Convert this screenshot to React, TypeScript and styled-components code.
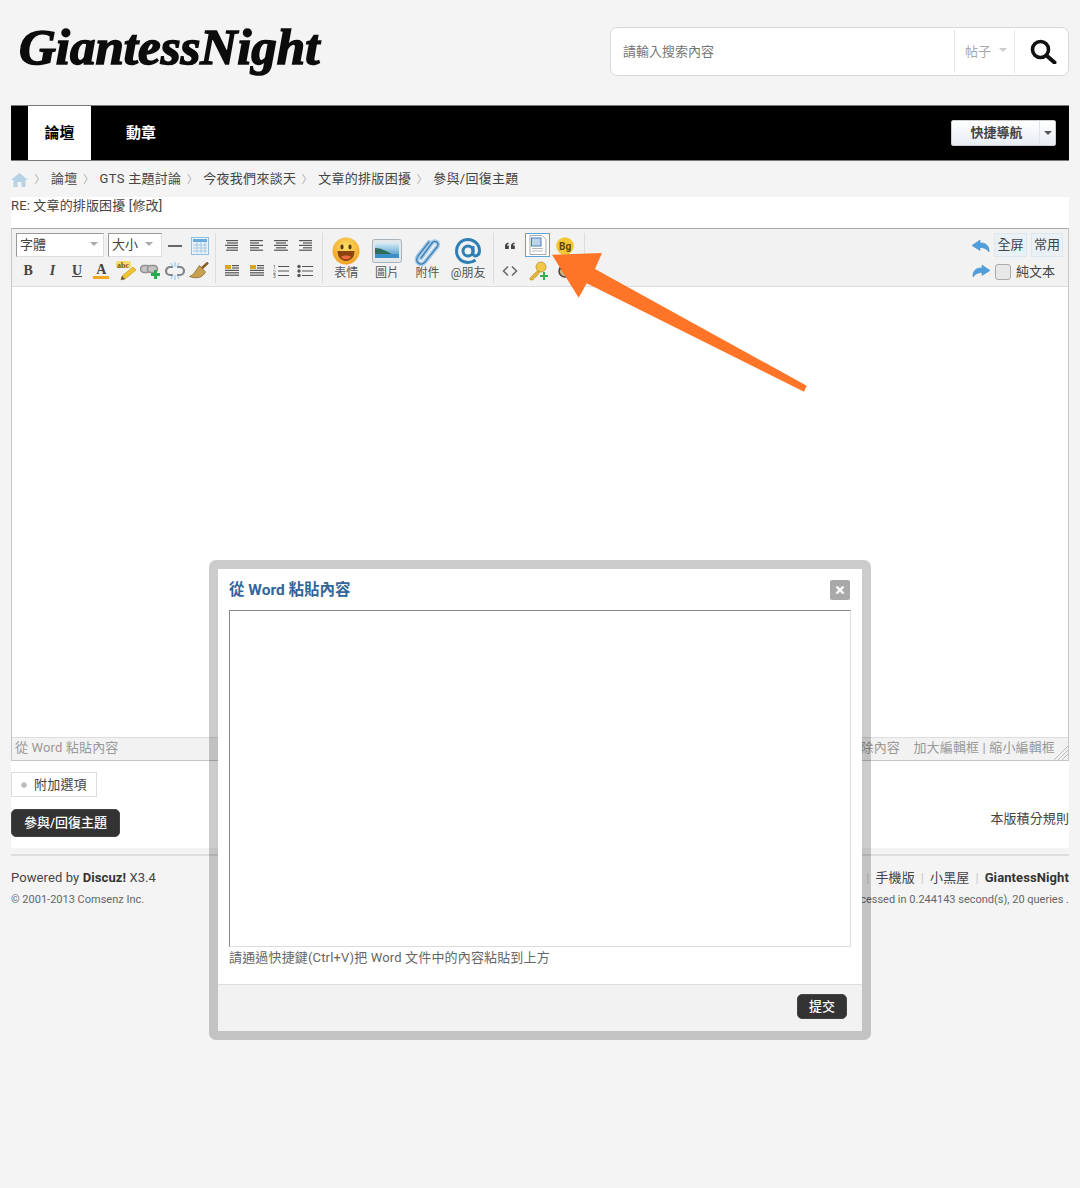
import styled, { createGlobalStyle } from "styled-components";
import { ReactNode } from "react";

const GlobalStyle = createGlobalStyle`
  html, body {
    margin: 0;
    padding: 0;
    background: #f4f4f4;
  }
  body {
    font-family: Roboto, "Noto Sans CJK TC", sans-serif;
    font-size: 13px;
    color: #444;
  }
  * {
    box-sizing: border-box;
  }
`;

const Page = styled.div`
  position: relative;
  width: 1080px;
  height: 1188px;
  padding: 0 11px;
  overflow: hidden;
`;

const Header = styled.header`
  height: 105px;
  display: flex;
  justify-content: space-between;
  align-items: flex-start;
`;

const Logo = styled.div`
  padding: 16px 0 0 8px;
  font-family: "Liberation Serif", serif;
  font-style: italic;
  font-weight: 700;
  font-size: 51px;
  line-height: 62px;
  letter-spacing: 0;
  color: #0c0c0c;
  -webkit-text-stroke: 1.6px #0c0c0c;
`;

const Search = styled.div`
  margin-top: 27px;
  width: 459px;
  height: 49px;
  display: flex;
  align-items: center;
  background: #fff;
  border: 1px solid #d8d8d8;
  border-radius: 7px;
  padding: 2px 0;
`;

const SearchText = styled.div`
  flex: 1;
  padding: 0 0 3px 12px;
  color: #757575;
`;

const SearchKind = styled.div`
  width: 61px;
  height: 100%;
  flex: none;
  display: flex;
  align-items: center;
  gap: 8px;
  padding: 0 0 3px 10px;
  color: #a8a8a8;
  border-left: 1px solid #e6e6e6;
  border-right: 1px solid #e6e6e6;
`;

const SmallCaret = styled.span<{ $color?: string }>`
  width: 0;
  height: 0;
  border-left: 4px solid transparent;
  border-right: 4px solid transparent;
  border-top: 4px solid ${(p) => p.$color || "#ccc"};
`;

const SearchBtn = styled.div`
  width: 53px;
  flex: none;
  display: flex;
  justify-content: center;
  align-items: center;
  padding-left: 4px;
`;

const Nav = styled.nav`
  height: 56px;
  background: #000;
  border-top: 1px solid #777;
  border-bottom: 1px solid #777;
  display: flex;
  align-items: stretch;
  padding-left: 17px;
`;

const NavTab = styled.a<{ $active?: boolean }>`
  width: ${(p) => (p.$active ? "63px" : "100px")};
  display: flex;
  justify-content: center;
  align-items: center;
  font-size: 15px;
  font-weight: 700;
  color: ${(p) => (p.$active ? "#000" : "#fff")};
  background: ${(p) => (p.$active ? "#fff" : "transparent")};
  padding-bottom: 4px;
`;

const QuickNav = styled.div`
  margin: 14px 13px 0 auto;
  width: 105px;
  height: 26px;
  display: flex;
  border-radius: 2px;
  background: linear-gradient(#ffffff, #e6ecf4);
  border: 1px solid #ccc;
  color: #444;
  font-weight: 700;
`;

const QuickLabel = styled.span`
  flex: 1;
  display: flex;
  justify-content: center;
  align-items: center;
  padding: 0 0 3px 2px;
  border-right: 1px solid #dfe4ea;
`;

const QuickCaret = styled.span`
  width: 15px;
  display: flex;
  justify-content: center;
  align-items: center;
`;

const Crumbs = styled.div`
  height: 36px;
  display: flex;
  align-items: center;
  padding-bottom: 3px;
  color: #444;
  svg {
    margin: 4px 1px 0 0;
  }
`;

const Crumb = styled.span`
  display: flex;
  align-items: center;
  letter-spacing: 0.28px;
`;

const Chevron = styled.span`
  width: 22px;
  text-align: center;
  color: #aaa;
  font-size: 11px;
`;

const Panel = styled.main`
  height: 651px;
  background: #fff;
  display: flex;
  flex-direction: column;
`;

const PostTitle = styled.div`
  height: 31px;
  line-height: 17px;
  letter-spacing: 0.15px;
`;

const Editor = styled.section`
  height: 533px;
  border: 1px solid #c5c5c5;
  border-top-color: #aaa;
  display: flex;
  flex-direction: column;
`;

const Toolbar = styled.div`
  height: 58px;
  flex: none;
  display: flex;
  padding: 4px 5px 0 4px;
  background: #f2f2f2;
  border-bottom: 1px solid #ddd;
`;

const Group = styled.div<{ $width: number; $pad?: number; $row?: boolean }>`
  width: ${(p) => p.$width}px;
  height: 50px;
  padding-left: ${(p) => p.$pad || 0}px;
  border-right: 1px solid #ddd;
  display: ${(p) => (p.$row ? "flex" : "block")};
`;

const Row = styled.div`
  height: 25px;
  display: flex;
  align-items: center;
`;

const Select = styled.div<{ $width: number; $caretPad: number; $gap: number }>`
  width: ${(p) => p.$width}px;
  height: 24px;
  margin-right: ${(p) => p.$gap}px;
  margin-top: -1px;
  display: flex;
  align-items: center;
  justify-content: space-between;
  padding: 0 ${(p) => p.$caretPad}px 3px 3px;
  background: #fff;
  border: 1px solid #ddd;
  border-left-color: #999;
  border-top-color: #999;
  color: #444;
`;

const Cell = styled.span<{ $width?: number }>`
  width: ${(p) => p.$width || 24.4}px;
  height: 24px;
  flex: none;
  display: flex;
  justify-content: center;
  align-items: center;
`;

const Letter = styled.span<{ $italic?: boolean; $under?: boolean; $bar?: boolean }>`
  font-family: "Liberation Serif", serif;
  font-weight: 700;
  font-size: 14px;
  line-height: 13px;
  color: #444;
  padding: 0 ${(p) => (p.$bar ? "3px" : "0")};
  font-style: ${(p) => (p.$italic ? "italic" : "normal")};
  text-decoration: ${(p) => (p.$under ? "underline" : "none")};
  border-bottom: ${(p) => (p.$bar ? "3px solid #f5a623" : "none")};
`;

const BigBtn = styled.div`
  width: 40.6px;
  height: 50px;
  display: flex;
  flex-direction: column;
  align-items: center;
  padding-top: 2px;
  font-size: 12px;
  line-height: 14px;
  color: #555;
`;

const BigIcon = styled.span`
  height: 31px;
  flex: none;
  display: flex;
  align-items: center;
`;

const WordCell = styled(Cell)`
  height: 24px;
  margin: -1px 0 0 1px;
  border: 1px solid #5aa5d8;
  background: #fff;
`;

const RightTools = styled.div`
  margin-left: auto;
  width: 95px;
`;

const ToolBtn = styled.span`
  height: 24px;
  width: 33px;
  flex: none;
  margin-top: -1px;
  padding-bottom: 3px;
  display: flex;
  justify-content: center;
  align-items: center;
  color: #444;
  background: #e9f0f6;
  border: 1px solid #dfe7ee;
  & + & {
    margin-left: 4px;
    width: 32px;
  }
`;

const CheckBox = styled.span`
  width: 16px;
  height: 16px;
  flex: none;
  margin: 2px 5px 0 1px;
  border: 1px solid #aaa;
  border-radius: 3px;
  background: #e8e8e8;
`;

const PlainLabel = styled.span`
  padding-bottom: 1px;
`;

const WriteArea = styled.div`
  flex: 1;
  background: #fff;
`;

const StatusBar = styled.div`
  height: 23px;
  flex: none;
  position: relative;
  display: flex;
  justify-content: space-between;
  align-items: center;
  padding: 0 13px 5px 3px;
  background: #f2f2f2;
  border-top: 1px solid #ddd;
  color: #999;
  letter-spacing: 0.15px;
`;

const Resize = styled.span`
  position: absolute;
  right: 0;
  bottom: 0;
  display: flex;
`;

const Options = styled.div`
  margin-top: 11px;
  width: 86px;
  height: 25px;
  display: flex;
  align-items: center;
  gap: 7px;
  padding: 0 0 2px 9px;
  border: 1px solid #ddd;
  color: #444;
  letter-spacing: 0.2px;
`;

const Dot = styled.span`
  width: 6px;
  height: 6px;
  margin-top: 2px;
  border-radius: 50%;
  background: #bbb;
  border: 1px solid #ccc;
`;

const SubmitRow = styled.div`
  margin-top: 12px;
  display: flex;
  justify-content: space-between;
  align-items: flex-start;
`;

const DarkButton = styled.button<{ $width: number; $height: number }>`
  width: ${(p) => p.$width}px;
  height: ${(p) => p.$height}px;
  padding: 0 0 3px;
  font: inherit;
  font-weight: 500;
  color: #fff;
  background: #333;
  border: 1px solid #444;
  border-radius: 5px;
`;

const RuleLink = styled.span`
  line-height: 19px;
  letter-spacing: 0.1px;
  color: #444;
`;

const Footer = styled.footer`
  margin-top: 6px;
  border-top: 2px solid #ddd;
  padding-top: 14px;
  display: flex;
  justify-content: space-between;
`;

const FooterCol = styled.div<{ $right?: boolean }>`
  text-align: ${(p) => (p.$right ? "right" : "left")};
  color: #666;
  line-height: 16px;
`;

const FooterLine = styled.div`
  color: #444;
  letter-spacing: 0.1px;
  b {
    font-weight: 700;
    color: #333;
  }
`;

const FooterSmall = styled.div`
  margin-top: 7px;
  font-size: 11px;
  line-height: 14px;
  color: #666;
`;

const Pipe = styled.span`
  margin: 0 6px;
  color: #ccc;
`;

const Modal = styled.div`
  position: absolute;
  left: 209px;
  top: 560px;
  width: 662px;
  height: 480px;
  border: 9px solid rgba(0, 0, 0, 0.2);
  border-radius: 7px;
  background-clip: padding-box;
  background-color: #fff;
  display: flex;
  flex-direction: column;
`;

const ModalBody = styled.div`
  flex: 1;
  padding: 0 11px;
`;

const ModalHead = styled.div`
  height: 41px;
  display: flex;
  justify-content: space-between;
  align-items: center;
  padding: 0 1px 0 0;
`;

const ModalTitle = styled.h3`
  margin: 0 0 4px;
  font-size: 15.5px;
  font-weight: 700;
  color: #369;
`;

const CloseBtn = styled.span`
  width: 20px;
  height: 20px;
  display: flex;
  justify-content: center;
  align-items: center;
  background: #a9a9a9;
  border-radius: 2px;
`;

const PasteBox = styled.textarea`
  display: block;
  width: 622px;
  height: 337px;
  padding: 0;
  resize: none;
  background: #fff;
  border: 1px solid #ddd;
  border-top-color: #888;
  border-left-color: #888;
  outline: none;
`;

const Hint = styled.p`
  margin: 2px 0 0;
  line-height: 17px;
  letter-spacing: 0.16px;
  color: #666;
`;

const ModalFoot = styled.div`
  height: 47px;
  flex: none;
  display: flex;
  justify-content: flex-end;
  align-items: center;
  padding: 0 15px 3px 0;
  background: #f2f2f2;
  border-top: 1px solid #ddd;
`;

const ArrowLayer = styled.svg`
  position: absolute;
  left: 0;
  top: 0;
  pointer-events: none;
`;

const UndoSvg = styled.svg<{ $flip?: boolean }>`
  transform: ${(p) => (p.$flip ? "scaleX(-1)" : "none")};
`;

const Ic = ({ w = 18, h = 18, children }: { w?: number; h?: number; children: ReactNode }) => (
  <svg width={w} height={h} viewBox={`0 0 ${w} ${h}`}>
    {children}
  </svg>
);

// alignment bars, x/width pairs for every line
const Lines = ({ rows, box }: { rows: [number, number][]; box?: boolean }) => (
  <Ic w={16} h={14}>
    {rows.map(([x, w], i) => (
      <rect key={i} x={x} y={1 + i * 2.4} width={w} height={1.2} fill="#555" />
    ))}
    {box && <rect x={1} y={1} width={6} height={4} fill="#d9a520" />}
  </Ic>
);

const HomeIcon = () => (
  <svg width="17" height="14" viewBox="0 0 17 14">
    <path d="M8.5 0 L17 7 H14.5 V14 H10.5 V9 H6.5 V14 H2.5 V7 H0 Z" fill="#b5d2e6" />
  </svg>
);

const SearchIcon = () => (
  <svg width="27" height="25" viewBox="0 0 27 25">
    <circle cx="10.5" cy="10.5" r="8" fill="none" stroke="#111" strokeWidth="3.6" />
    <path d="M16.5 16.5 L24.5 23.5" stroke="#111" strokeWidth="4" strokeLinecap="round" />
  </svg>
);

const TableIcon = () => (
  <Ic w={18} h={18}>
    <rect x=".5" y=".5" width="17" height="17" fill="#e8f2fa" stroke="#8fc0e0" />
    <rect x="2" y="2" width="14" height="3" fill="#6aaadc" />
    <path d="M2 8h14M2 11h14M2 14h14M6 5v11M10 5v11M14 5v11" stroke="#a9c8df" strokeWidth="1" />
  </Ic>
);

const AbcIcon = () => (
  <Ic w={22} h={20}>
    <rect x="1" y="0" width="15" height="7" rx="2" fill="#f6dc6a" />
    <text x="2" y="6.5" fontFamily="Liberation Serif" fontWeight="700" fontSize="8" fill="#7a5a10">abc</text>
    <path d="M18 6 L21 9 L10 18 L6 19 L7 15 Z" fill="#f1c232" stroke="#c99a20" strokeWidth=".7" />
    <path d="M7 15 L6 19 L10 18 Z" fill="#555" />
  </Ic>
);

const LinkIcon = () => (
  <Ic w={20} h={18}>
    <rect x="0.500" y="3.500" width="10" height="7" rx="3.500" fill="#c4c4c4" stroke="#929292" strokeWidth="1.600" />
    <rect x="7.500" y="3.500" width="10" height="7" rx="3.500" fill="#c4c4c4" stroke="#929292" strokeWidth="1.600" />
    <path d="M14 8h3v3h3v3h-3v3h-3v-3h-3v-3h3z" fill="#2fa84f" />
  </Ic>
);

const UnlinkIcon = () => (
  <Ic w={20} h={18}>
    <path d="M8 5H5a4 4 0 0 0 0 8h3M12 5h3a4 4 0 0 1 0 8h-3" fill="none" stroke="#7f8589" strokeWidth="2.200" />
    <path d="M10 0v5M10 13v5M6 1l2 4M14 1l-2 4M6 17l2-4M14 17l-2-4" stroke="#8cc4ec" strokeWidth="1" />
  </Ic>
);

const BroomIcon = () => (
  <Ic w={20} h={18}>
    <path d="M19 0.500 L12 7" stroke="#8a5c22" strokeWidth="2.400" />
    <path d="M10.500 3.500 L16.500 10 C13.500 16 7 17 0.500 14.500 C5 13 7 8 10.500 3.500 Z" fill="#c9a04f" stroke="#7d5e24" strokeWidth=".7" />
  </Ic>
);

const SmileIcon = () => (
  <svg width="28" height="28" viewBox="0 0 28 28">
    <defs>
      <radialGradient id="sm" cx="50%" cy="35%" r="65%">
        <stop offset="0%" stopColor="#ffe26a" />
        <stop offset="100%" stopColor="#f0a020" />
      </radialGradient>
    </defs>
    <circle cx="14" cy="14" r="13.5" fill="url(#sm)" />
    <ellipse cx="10" cy="10" rx="1.6" ry="2.4" fill="#5c3a10" />
    <ellipse cx="18" cy="10" rx="1.6" ry="2.4" fill="#5c3a10" />
    <path d="M5.500 14 H22.500 C22.500 21 18 24 14 24 C10 24 5.500 21 5.500 14 Z" fill="#8a4310" />
    <path d="M9 20 C11 18 17 18 19 20 C17 23 11 23 9 20 Z" fill="#ef6a3a" />
  </svg>
);

const ImageIcon = () => (
  <svg width="30" height="24" viewBox="0 0 30 24">
    <defs>
      <linearGradient id="sky" x1="0" y1="0" x2="0" y2="1">
        <stop offset="0%" stopColor="#d4ecf8" />
        <stop offset="100%" stopColor="#3d8fc4" />
      </linearGradient>
    </defs>
    <rect x=".5" y=".5" width="29" height="23" rx="2" fill="#e4e8ea" stroke="#a9b2b8" />
    <rect x="3" y="4" width="24" height="15" fill="url(#sky)" />
    <path d="M3 9 C9 9 14 12 20 15 H3 Z" fill="#2f6d5a" />
    <path d="M3 15 H27 V19 H3 Z" fill="#3b8fc6" />
  </svg>
);

const ClipIcon = () => (
  <svg width="28" height="30" viewBox="0 0 28 30">
    <path
      d="M8 22 L19 7 C22 3 27 7 24 11 L12 26 C8 31 1 26 5 20 L16 6"
      fill="none"
      stroke="#a8cbe6"
      strokeWidth="4.400"
      strokeLinecap="round"
    />
    <path
      d="M8 22 L19 7 C22 3 27 7 24 11 L12 26 C8 31 1 26 5 20 L16 6"
      fill="none"
      stroke="#3c7fb6"
      strokeWidth="1.300"
      strokeLinecap="round"
    />
  </svg>
);

const AtIcon = () => (
  <svg width="28" height="28" viewBox="0 0 28 28">
    <circle cx="14" cy="14" r="5" fill="none" stroke="#2f7fb5" strokeWidth="3" />
    <path
      d="M19 9 V16.500 C19 20 25.500 20 25.500 14 C25.500 7 20 2.500 14 2.500 C7 2.500 2.500 8 2.500 14 C2.500 20.500 7.500 25.500 14 25.500 C17 25.500 19.500 24.500 21.500 23"
      fill="none"
      stroke="#2f7fb5"
      strokeWidth="3"
    />
  </svg>
);

const QuoteIcon = () => (
  <Ic w={12} h={10}>
    <path d="M1 8V5C1 3 2 2 4.500 1.500V3C3.500 3.300 3 3.800 3 4.500H4.800V8ZM7 8V5C7 3 8 2 10.500 1.500V3C9.500 3.300 9 3.800 9 4.500H10.800V8Z" fill="#444" />
  </Ic>
);

const WordIcon = () => (
  <Ic w={18} h={20}>
    <path d="M1 .5 H13 L17 4.500 V19.500 H1 Z" fill="#fff" stroke="#a9a9a9" />
    <rect x="2.500" y="3" width="9.500" height="8" fill="#bcd4ee" stroke="#4c7fb8" />
    <path d="M3 13.500h11M3 16h11" stroke="#b8b8b8" />
  </Ic>
);

const BgIcon = () => (
  <svg width="18" height="18" viewBox="0 0 18 18">
    <circle cx="9" cy="9" r="8.800" fill="#f2c635" />
    <text x="3" y="12.500" fontFamily="Roboto" fontWeight="700" fontSize="10" fill="#5a4510">Bg</text>
  </svg>
);

const CodeIcon = () => (
  <Ic w={16} h={12}>
    <path d="M6 1.500 L1.500 6 L6 10.500 M10 1.500 L14.500 6 L10 10.500" fill="none" stroke="#666" strokeWidth="1.500" />
  </Ic>
);

const KeyIcon = () => (
  <Ic w={20} h={20}>
    <circle cx="13" cy="6" r="5" fill="#f0c84a" stroke="#b08a20" strokeWidth=".7" />
    <path d="M10 9 L2 17 L2 19 L5 19 L6 17 L8 16 L12 11 Z" fill="#e2b53a" stroke="#b08a20" strokeWidth=".5" />
    <path d="M12 14h3v-3h2v3h3v2h-3v3h-2v-3h-3z" fill="#35b04f" />
  </Ic>
);

const PaletteIcon = () => (
  <Ic w={16} h={16}>
    <circle cx="8" cy="8" r="6" fill="#c9b27a" stroke="#444" strokeWidth="1.500" />
    <circle cx="5" cy="5" r="2" fill="#222" />
  </Ic>
);

const UndoIcon = ({ flip }: { flip?: boolean }) => (
  <UndoSvg $flip={flip} width="18" height="14" viewBox="0 0 18 14">
    <path d="M8 1 L0 6.500 L8 11.500 V8.500 C12 8.500 15 10 17 13 C17.500 7 14 3.500 8 4 Z" fill="#4f9fdc" stroke="#3c84bd" strokeWidth=".5" />
  </UndoSvg>
);

const ResizeIcon = () => (
  <svg width="14" height="14" viewBox="0 0 14 14">
    <path d="M14 0 L0 14 M14 4 L4 14 M14 8 L8 14" stroke="#bbb" strokeWidth="1" />
  </svg>
);

const CloseIcon = () => (
  <svg width="10" height="10" viewBox="0 0 10 10">
    <path d="M1.500 1.500 L8.500 8.500 M8.500 1.500 L1.500 8.500" stroke="#fff" strokeWidth="2.400" />
  </svg>
);

const crumbs = ["論壇", "GTS 主題討論", "今夜我們來談天", "文章的排版困擾", "參與/回復主題"];

function App() {
  return (
    <Page>
      <GlobalStyle />
      <Header>
        <Logo>GiantessNight</Logo>
        <Search>
          <SearchText>請輸入搜索內容</SearchText>
          <SearchKind>
            帖子
            <SmallCaret />
          </SearchKind>
          <SearchBtn>
            <SearchIcon />
          </SearchBtn>
        </Search>
      </Header>

      <Nav>
        <NavTab $active>論壇</NavTab>
        <NavTab>動章</NavTab>
        <QuickNav>
          <QuickLabel>快捷導航</QuickLabel>
          <QuickCaret>
            <SmallCaret $color="#555" />
          </QuickCaret>
        </QuickNav>
      </Nav>

      <Crumbs>
        <HomeIcon />
        {crumbs.map((c) => (
          <Crumb key={c}>
            <Chevron>〉</Chevron>
            {c}
          </Crumb>
        ))}
      </Crumbs>

      <Panel>
        <PostTitle>RE: 文章的排版困擾 [修改]</PostTitle>
        <Editor>
          <Toolbar>
            <Group $width={200}>
              <Row>
                <Select $width={88} $caretPad={5} $gap={4}>
                  字體
                  <SmallCaret $color="#aaa" />
                </Select>
                <Select $width={54} $caretPad={8} $gap={1}>
                  大小
                  <SmallCaret $color="#aaa" />
                </Select>
                <Cell>
                  <Ic w={14} h={4}>
                    <rect y="1" width="14" height="2" fill="#666" />
                  </Ic>
                </Cell>
                <Cell>
                  <TableIcon />
                </Cell>
              </Row>
              <Row>
                <Cell>
                  <Letter>B</Letter>
                </Cell>
                <Cell>
                  <Letter $italic>I</Letter>
                </Cell>
                <Cell>
                  <Letter $under>U</Letter>
                </Cell>
                <Cell>
                  <Letter $bar>A</Letter>
                </Cell>
                <Cell>
                  <AbcIcon />
                </Cell>
                <Cell>
                  <LinkIcon />
                </Cell>
                <Cell>
                  <UnlinkIcon />
                </Cell>
                <Cell>
                  <BroomIcon />
                </Cell>
              </Row>
            </Group>

            <Group $width={107} $pad={4}>
              <Row>
                <Cell>
                  <Lines rows={[[2, 12], [3, 11], [1, 13], [3, 11], [2, 12]]} />
                </Cell>
                <Cell>
                  <Lines rows={[[1, 13], [1, 9], [1, 13], [1, 9], [1, 13]]} />
                </Cell>
                <Cell>
                  <Lines rows={[[1, 14], [3, 10], [1, 14], [3, 10], [1, 14]]} />
                </Cell>
                <Cell>
                  <Lines rows={[[2, 13], [6, 9], [2, 13], [6, 9], [2, 13]]} />
                </Cell>
              </Row>
              <Row>
                <Cell>
                  <Lines box rows={[[8, 7], [8, 7], [1, 14], [1, 14], [1, 14]]} />
                </Cell>
                <Cell>
                  <Lines box rows={[[8, 7], [8, 7], [1, 14], [1, 14], [1, 14]]} />
                </Cell>
                <Cell>
                  <Ic w={16} h={14}>
                    <text x="0" y="5" fontSize="5" fontFamily="Roboto" fill="#555">1</text>
                    <text x="0" y="9.500" fontSize="5" fontFamily="Roboto" fill="#555">2</text>
                    <text x="0" y="14" fontSize="5" fontFamily="Roboto" fill="#555">3</text>
                    <path d="M5 2.500h11M5 7h11M5 11.500h11" stroke="#555" strokeWidth="1.200" />
                  </Ic>
                </Cell>
                <Cell>
                  <Ic w={16} h={14}>
                    <circle cx="2" cy="2.500" r="1.700" fill="#555" />
                    <circle cx="2" cy="7" r="1.700" fill="#555" />
                    <circle cx="2" cy="11.500" r="1.700" fill="#555" />
                    <path d="M5 2.500h11M5 7h11M5 11.500h11" stroke="#555" strokeWidth="1.200" />
                  </Ic>
                </Cell>
              </Row>
            </Group>

            <Group $width={171} $pad={3} $row>
              <BigBtn>
                <BigIcon>
                  <SmileIcon />
                </BigIcon>
                表情
              </BigBtn>
              <BigBtn>
                <BigIcon>
                  <ImageIcon />
                </BigIcon>
                圖片
              </BigBtn>
              <BigBtn>
                <BigIcon>
                  <ClipIcon />
                </BigIcon>
                附件
              </BigBtn>
              <BigBtn>
                <BigIcon>
                  <AtIcon />
                </BigIcon>
                @朋友
              </BigBtn>
            </Group>

            <Group $width={91} $pad={2}>
              <Row>
                <Cell $width={28}>
                  <QuoteIcon />
                </Cell>
                <WordCell $width={25}>
                  <WordIcon />
                </WordCell>
                <Cell $width={30}>
                  <BgIcon />
                </Cell>
              </Row>
              <Row>
                <Cell $width={28}>
                  <CodeIcon />
                </Cell>
                <Cell $width={28}>
                  <KeyIcon />
                </Cell>
                <Cell $width={26}>
                  <PaletteIcon />
                </Cell>
              </Row>
            </Group>

            <RightTools>
              <Row>
                <Cell $width={26}>
                  <UndoIcon />
                </Cell>
                <ToolBtn>全屏</ToolBtn>
                <ToolBtn>常用</ToolBtn>
              </Row>
              <Row>
                <Cell $width={26}>
                  <UndoIcon flip />
                </Cell>
                <CheckBox />
                <PlainLabel>純文本</PlainLabel>
              </Row>
            </RightTools>
          </Toolbar>
          <WriteArea />
          <StatusBar>
            <span>從 Word 粘貼內容</span>
            <span>清除內容 &nbsp;&nbsp; 加大編輯框 | 縮小編輯框</span>
            <Resize>
              <ResizeIcon />
            </Resize>
          </StatusBar>
        </Editor>
        <Options>
          <Dot />
          附加選項
        </Options>
        <SubmitRow>
          <DarkButton $width={109} $height={28}>參與/回復主題</DarkButton>
          <RuleLink>本版積分規則</RuleLink>
        </SubmitRow>
      </Panel>

      <Footer>
        <FooterCol>
          <FooterLine>
            Powered by <b>Discuz!</b> X3.4
          </FooterLine>
          <FooterSmall>© 2001-2013 Comsenz Inc.</FooterSmall>
        </FooterCol>
        <FooterCol $right>
          <FooterLine>
            <Pipe>|</Pipe>手機版<Pipe>|</Pipe>小黑屋<Pipe>|</Pipe>
            <b>GiantessNight</b>
          </FooterLine>
          <FooterSmall>Processed in 0.244143 second(s), 20 queries .</FooterSmall>
        </FooterCol>
      </Footer>

      <Modal>
        <ModalBody>
          <ModalHead>
            <ModalTitle>從 Word 粘貼內容</ModalTitle>
            <CloseBtn>
              <CloseIcon />
            </CloseBtn>
          </ModalHead>
          <PasteBox readOnly />
          <Hint>請通過快捷鍵(Ctrl+V)把 Word 文件中的內容粘貼到上方</Hint>
        </ModalBody>
        <ModalFoot>
          <DarkButton $width={50} $height={25}>提交</DarkButton>
        </ModalFoot>
      </Modal>

      <ArrowLayer width="1080" height="1188">
        <polygon
          points="552,254.700 602,253 595,269 806.700,385.700 804,391.700 586.700,283.300 578.700,297.700"
          fill="#fe7527"
        />
      </ArrowLayer>
    </Page>
  );
}

export default App;
